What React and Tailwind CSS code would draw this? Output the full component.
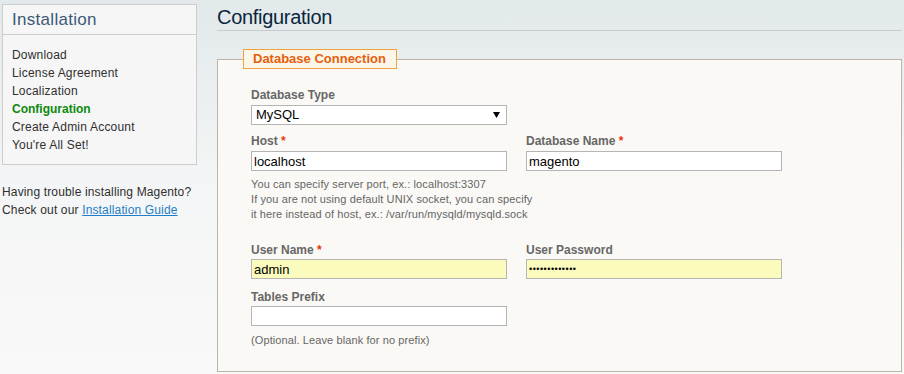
import React from "react";

const labelCls = "block text-[12px] leading-[16px] font-bold text-[#676767]";
const boxCls =
  "block w-[256px] h-[20px] border border-[#b5b5b5] pl-[2px] leading-[18px] text-black outline-none";
const inputCls = `${boxCls} text-[13px]`;

function Req() {
  return <span className="text-[#eb340a] font-bold"> *</span>;
}

export default function App() {
  return (
    <div
      className="w-[904px] h-[374px] flex bg-gradient-to-b from-[#e2e9eb] via-[#f4f5f6] to-[#f9f9f9] overflow-hidden"
      style={{ fontFamily: '"Liberation Sans", Arial, sans-serif' }}
    >
      {/* Sidebar */}
      <div className="w-[217px] shrink-0 pl-[2px] pt-[4px]">
        <div className="w-[195px] h-[161px] border border-[#cdcdcd] bg-[#f6f6f6]">
          <div className="h-[30px] border-b border-[#cdcdcd] pl-[9px] pt-[1px] text-[17px] leading-[28px] tracking-[0.3px] text-[#3c5a76]">
            Installation
          </div>
          <ul className="pt-[11px] pl-[9px] text-[12px] leading-[18px] tracking-[0.2px] text-[#2f2f2f]">
            <li>Download</li>
            <li>License Agreement</li>
            <li>Localization</li>
            <li className="font-bold tracking-normal text-[#0c8a0c]">Configuration</li>
            <li>Create Admin Account</li>
            <li>You're All Set!</li>
          </ul>
        </div>
        <p className="mt-[18px] text-[12px] leading-[18px] tracking-[0.15px] text-[#2f2f2f]">
          Having trouble installing Magento?
          <br />
          Check out our{" "}
          <a className="text-[#1e7ec8] underline" href="#">
            Installation Guide
          </a>
        </p>
      </div>

      {/* Main */}
      <div className="w-[685px] shrink-0">
        <div className="h-[31px] border-b border-[#c8cccc] pt-[5px] text-[20px] leading-[24px] tracking-[-0.3px] text-[#0a263c]">
          Configuration
        </div>

        <fieldset className="mt-[18px] border border-[#bcb4a6] bg-[#faf9f5] pb-[23px]">
          <legend className="ml-[25px] border border-[#f0a23c] bg-[#fbf6ea] pl-[9px] pr-[10px] text-[13px] leading-[18px] font-bold text-[#e5600c]">
            Database Connection
          </legend>

          <div className="pl-[33px] pt-[18px]">
            <label className={labelCls}>Database Type</label>
            <div className="relative mt-[2px] w-[256px]">
              <select
                defaultValue="mysql"
                className="block w-[256px] h-[20px] appearance-none border border-[#b5b5b5] bg-white pl-[4px] text-[13px] leading-[18px] text-black outline-none"
              >
                <option value="mysql">MySQL</option>
              </select>
              <svg
                className="absolute right-[7px] top-[7px] pointer-events-none"
                width="7"
                height="6"
                viewBox="0 0 7 6"
              >
                <path d="M0 0 H7 L3.5 6 Z" fill="#000" />
              </svg>
            </div>

            <div className="mt-[8px] flex gap-x-[19px]">
              <div>
                <label className={labelCls}>
                  Host
                  <Req />
                </label>
                <input className={`${inputCls} mt-[2px] bg-white`} defaultValue="localhost" />
              </div>
              <div>
                <label className={labelCls}>
                  Database Name
                  <Req />
                </label>
                <input className={`${inputCls} mt-[2px] bg-white`} defaultValue="magento" />
              </div>
            </div>

            <p className="mt-[6px] text-[11px] leading-[15px] tracking-[0.1px] text-[#666666]">
              You can specify server port, ex.: localhost:3307
              <br />
              If you are not using default UNIX socket, you can specify
              <br />
              it here instead of host, ex.: /var/run/mysqld/mysqld.sock
            </p>

            <div className="mt-[20px] flex gap-x-[19px]">
              <div>
                <label className={labelCls}>
                  User Name
                  <Req />
                </label>
                <input className={`${inputCls} mt-[1px] bg-[#fafbbc]`} defaultValue="admin" />
              </div>
              <div>
                <label className={labelCls}>User Password</label>
                <input
                  type="password"
                  className={`${boxCls} mt-[1px] bg-[#fafbbc] text-[9px] tracking-[0.5px]`}
                  defaultValue="1234567890123"
                />
              </div>
            </div>

            <div className="mt-[10px]">
              <label className={labelCls}>Tables Prefix</label>
              <input className={`${inputCls} mt-[1px] bg-white`} defaultValue="" />
            </div>

            <p className="mt-[7px] text-[11px] leading-[15px] tracking-[0.1px] text-[#666666]">
              (Optional. Leave blank for no prefix)
            </p>
          </div>
        </fieldset>
      </div>
    </div>
  );
}
